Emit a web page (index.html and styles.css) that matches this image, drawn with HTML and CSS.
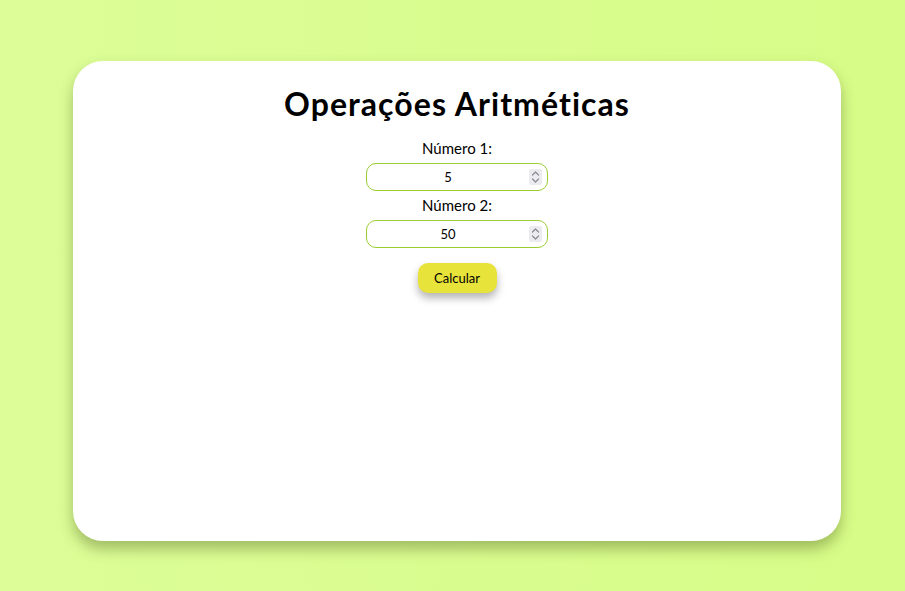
FILE: index.html
```html
<!DOCTYPE html>
<html lang="pt-BR">
<head>
<meta charset="UTF-8">
<title>Operações Aritméticas</title>
<link rel="stylesheet" href="styles.css">
</head>
<body>
<main class="card">
  <h1 class="title">Operações Aritméticas</h1>
  <form class="form">
    <label class="label" for="n1">Número 1:</label>
    <div class="field-wrap">
      <input class="field" id="n1" type="number" value="5">
      <span class="spin" aria-hidden="true"><svg width="9" height="14" viewBox="0 0 9 14"><path d="M1.5 5 L4.5 2 L7.5 5 M1.5 9 L4.5 12 L7.5 9" fill="none" stroke="#8a8a92" stroke-width="1.2" stroke-linecap="round" stroke-linejoin="round"/></svg></span>
    </div>
    <label class="label" for="n2">Número 2:</label>
    <div class="field-wrap">
      <input class="field" id="n2" type="number" value="50">
      <span class="spin" aria-hidden="true"><svg width="9" height="14" viewBox="0 0 9 14"><path d="M1.5 5 L4.5 2 L7.5 5 M1.5 9 L4.5 12 L7.5 9" fill="none" stroke="#8a8a92" stroke-width="1.2" stroke-linecap="round" stroke-linejoin="round"/></svg></span>
    </div>
    <button class="btn" type="button">Calcular</button>
  </form>
</main>
</body>
</html>
```
FILE: styles.css
```css
html, body { height: 100%; }
body {
  margin: 0;
  background: linear-gradient(90deg, #dcfd98 0%, #d7fc87 100%);
  font-family: "Lato", "Noto Sans", sans-serif;
  display: flex;
  justify-content: center;
  padding: 61px 0 0 9px;
  box-sizing: border-box;
}
.card {
  width: 768px;
  height: 480px;
  background: #fff;
  border-radius: 30px;
  box-shadow: 0 8px 14px rgba(90, 110, 40, 0.45);
  display: flex;
  flex-direction: column;
  align-items: center;
  padding-top: 24px;
  box-sizing: border-box;
}
.title {
  margin: 0;
  font-size: 32px;
  font-weight: 700;
  line-height: 38px;
  letter-spacing: 1.05px;
  color: #000;
}
.form {
  display: flex;
  flex-direction: column;
  align-items: center;
  margin-top: 14px;
}
.label {
  font-size: 15px;
  line-height: 22px;
  color: #000;
  margin-bottom: 4px;
}
.field-wrap {
  position: relative;
  margin-bottom: 3px;
}
.field {
  display: block;
  width: 182px;
  height: 28px;
  box-sizing: border-box;
  border: 1px solid #9acd32;
  border-radius: 10px;
  text-align: center;
  font-family: inherit;
  font-size: 13px;
  color: #000;
  padding: 0 19px 0 1px;
  outline: none;
  -moz-appearance: textfield;
}
.field::-webkit-inner-spin-button,
.field::-webkit-outer-spin-button {
  -webkit-appearance: none;
  margin: 0;
}
.spin {
  position: absolute;
  right: 6px;
  top: 6px;
  width: 13px;
  height: 16px;
  background: #ebebf0;
  border-radius: 2px;
  display: flex;
  align-items: center;
  justify-content: center;
}
.btn {
  margin-top: 12px;
  width: 79px;
  height: 30px;
  border: none;
  border-radius: 10px;
  background: #e7e33a;
  font-family: inherit;
  font-size: 13px;
  color: #000;
  box-shadow: 0 5px 8px rgba(0, 0, 0, 0.3);
}
```
